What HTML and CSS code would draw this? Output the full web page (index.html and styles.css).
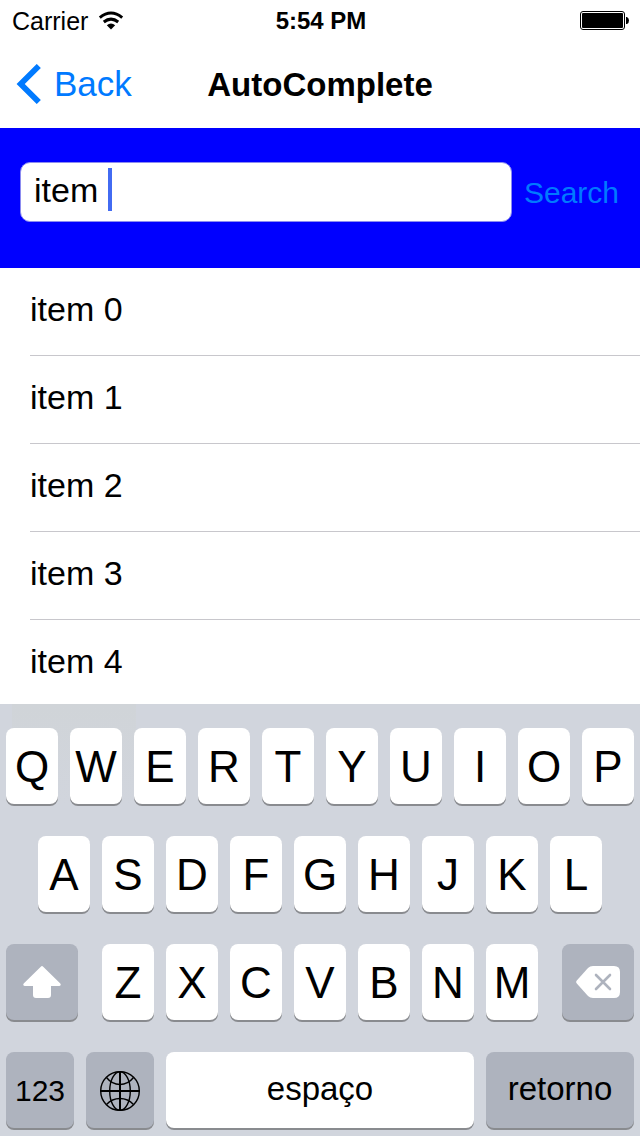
FILE: index.html
```html
<!DOCTYPE html>
<html lang="en">
<head>
<meta charset="utf-8">
<meta name="viewport" content="width=device-width">
<title>AutoComplete</title>
<link rel="stylesheet" href="styles.css">
</head>
<body>
<div class="app">
  <div class="status">
    <div class="carrier">
      <span>Carrier</span>
      <svg width="26" height="20" viewBox="0 0 26 20" aria-hidden="true">
        <path d="M1.800 6.600Q13-2.600 24.200 6.600M5.800 11Q13 5.200 20.200 11" fill="none" stroke="#000" stroke-width="3"/>
        <path d="M8.800 14.200Q13 10.600 17.200 14.200L13 18.400Z"/>
      </svg>
    </div>
    <span class="time">5:54 PM</span>
    <svg class="battery" width="50" height="20" viewBox="0 0 50 20" role="img" aria-label="Battery full">
      <rect x=".5" y=".5" width="44" height="18" rx="2.5" fill="none" stroke="#000"/>
      <rect x="2" y="2" width="41" height="15" rx="1"/>
      <path d="M46 6h1q2 1 2 3.500t-2 3.500h-1z"/>
    </svg>
  </div>
  <header class="nav">
    <a class="back" href="#">
      <svg width="26" height="40" viewBox="0 0 26 40" aria-hidden="true"><path d="M22.800 2L4.700 20 22.800 38" fill="none" stroke="#007aff" stroke-width="5.800"/></svg>
      <span>Back</span>
    </a>
    <h1 class="title">AutoComplete</h1>
  </header>
  <form class="search">
    <div class="field">
      <input class="input" type="text" value="item " aria-label="Search text" autocomplete="off">
      <span class="caret"></span>
    </div>
    <button class="submit" type="button">Search</button>
  </form>
  <ul class="list">
    <li class="item">item 0</li>
    <li class="item">item 1</li>
    <li class="item">item 2</li>
    <li class="item">item 3</li>
    <li class="item">item 4</li>
  </ul>
  <div class="keyboard">
    <div class="keys">
      <button class="key">Q</button><button class="key">W</button><button class="key">E</button><button class="key">R</button><button class="key">T</button><button class="key">Y</button><button class="key">U</button><button class="key">I</button><button class="key">O</button><button class="key">P</button>
    </div>
    <div class="keys keys-inset">
      <button class="key">A</button><button class="key">S</button><button class="key">D</button><button class="key">F</button><button class="key">G</button><button class="key">H</button><button class="key">J</button><button class="key">K</button><button class="key">L</button>
    </div>
    <div class="keys keys-wide">
      <button class="key key-dark key-edge" aria-label="Shift">
        <svg width="38" height="32" viewBox="0 0 38 32"><path d="M17.800.7Q19-.5 20.200.7L37.300 17.500Q38.600 19.500 36.300 20H28V29Q28 32 25 32H13Q10 32 10 29V20H1.700Q-.6 19.500.7 17.500Z" fill="#fff"/></svg>
      </button>
      <div class="letters">
        <button class="key">Z</button><button class="key">X</button><button class="key">C</button><button class="key">V</button><button class="key">B</button><button class="key">N</button><button class="key">M</button>
      </div>
      <button class="key key-dark key-edge" aria-label="Delete">
        <svg width="44" height="32" viewBox="0 0 44 32"><path d="M17 0H38Q44 0 44 6V26Q44 32 38 32H17Q14 32 12 30L.8 17.500Q-.5 16 .8 14.500L12 2Q14 0 17 0Z" fill="#fff"/><path d="M20 9L34 23M34 9L20 23" stroke="#aeb3be" stroke-width="2.600" stroke-linecap="round"/></svg>
      </button>
    </div>
    <div class="keys">
      <button class="key key-dark key-small key-number">123</button>
      <button class="key key-dark key-small" aria-label="Next keyboard">
        <svg width="40" height="40" viewBox="0 0 40 40" fill="none" stroke="#000" stroke-width="1.400"><circle cx="20" cy="20" r="19.300"/><ellipse cx="20" cy="20" rx="10.300" ry="19.300"/><path d="M6.500 6.500Q12 13.500 20 13.500T33.500 6.500M6.500 33.500Q12 27.500 20 27.500T33.500 33.500"/><path d="M20 0V40M0 20H40" stroke-width="2"/></svg>
      </button>
      <button class="key key-text">espaço</button>
      <button class="key key-dark key-text key-return">retorno</button>
    </div>
  </div>
</div>
</body>
</html>
```
FILE: styles.css
```css
* { box-sizing: border-box; }

body {
  margin: 0;
  background: #fff;
  color: #000;
  font-family: "Liberation Sans", Arial, sans-serif;
}

button, input {
  margin: 0;
  padding: 0;
  border: 0;
  font: inherit;
  color: inherit;
}

.app {
  display: flex;
  flex-direction: column;
  height: 100vh;
}

.status {
  display: grid;
  grid-template-columns: 1fr auto 1fr;
  align-items: center;
  height: 40px;
  padding: 2px 10px 0 12px;
  font-size: 24px;
}

.carrier {
  display: flex;
  align-items: center;
  gap: 10px;
  font-size: 25px;
}

.time { font-weight: bold; }

.battery { justify-self: end; }

.nav {
  display: grid;
  grid-template-columns: 1fr auto 1fr;
  align-items: center;
  height: 88px;
  padding: 0 16px;
}

.back {
  display: flex;
  align-items: center;
  gap: 12px;
  color: #007aff;
  font-size: 35px;
  text-decoration: none;
}

.title {
  margin: 0;
  padding-top: 2px;
  font-size: 33px;
  font-weight: bold;
}

.search {
  display: flex;
  align-items: center;
  gap: 12px;
  height: 140px;
  padding: 0 21px 12px 20px;
  background: #00f;
}

.field {
  position: relative;
  flex: 1;
}

.input {
  display: block;
  width: 100%;
  height: 60px;
  padding: 0 13px 4px;
  border: 1px solid #8c8cf0;
  border-radius: 10px;
  background: #fff;
  font-size: 34px;
  outline: none;
}

.caret {
  position: absolute;
  top: 6px;
  left: 88px;
  width: 4px;
  height: 43px;
  background: #426bf2;
}

.submit {
  padding-top: 2px;
  background: none;
  color: #007aff;
  font-size: 30px;
}

.list {
  flex: 1;
  min-height: 0;
  margin: 0;
  padding: 0 0 0 30px;
  overflow: hidden;
  list-style: none;
}

.item {
  height: 88px;
  border-bottom: 1px solid #c8c7cc;
  font-size: 34px;
  line-height: 82px;
}

.keyboard {
  display: flex;
  flex-direction: column;
  gap: 32px;
  padding: 24px 6px 8px;
  background: linear-gradient(#d0d4d8, #d1d5dd) 12px 0 / 124px 100px no-repeat, #d1d5dd;
}

.keys, .letters {
  display: flex;
  gap: 12px;
}

.keys-inset { padding: 0 32px; }

.keys-wide { gap: 24px; }

.letters { flex: 1; }

.key {
  display: flex;
  flex: 1;
  align-items: center;
  justify-content: center;
  min-width: 0;
  height: 76px;
  padding-top: 2px;
  border-radius: 8px;
  background: #fff;
  box-shadow: 0 2px 0 #898b8f;
  font-size: 44px;
}

.key-dark { background: #aeb3be; }

.key-edge {
  flex: 0 0 72px;
  padding-top: 0;
}

.key-small { flex: 0 0 68px; }

.key-number { font-size: 30px; }

.key-text {
  padding: 0 0 2px;
  font-size: 33px;
}

.key-return { flex: 0 0 148px; }
```
